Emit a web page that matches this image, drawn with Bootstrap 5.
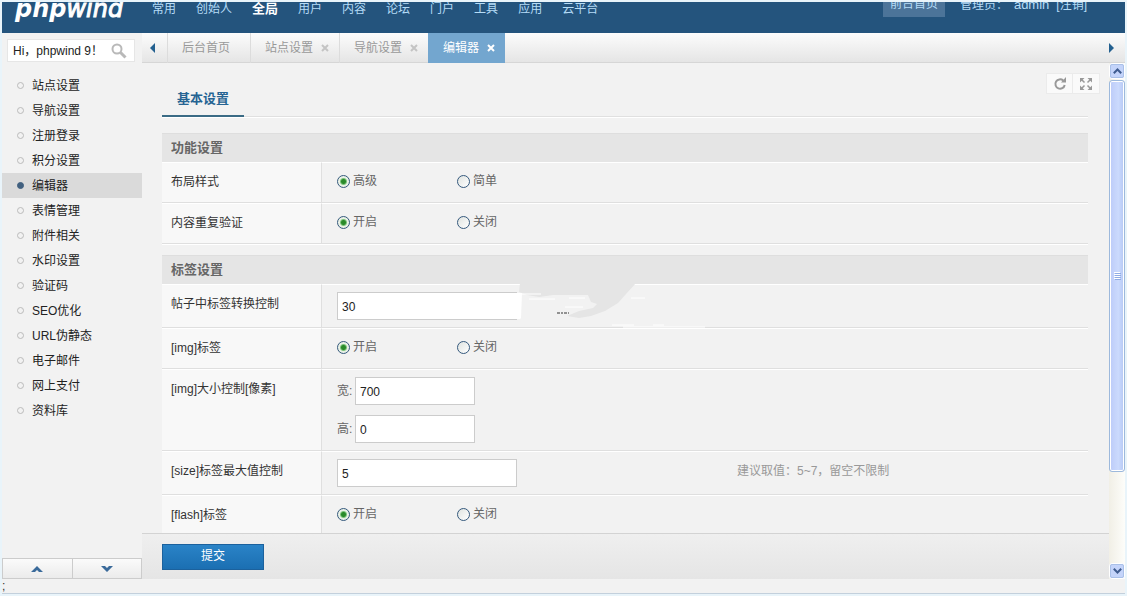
<!DOCTYPE html>
<html lang="zh-CN">
<head>
<meta charset="utf-8">
<meta name="viewport" content="width=device-width, initial-scale=1">
<title>phpwind</title>
<link href="https://cdn.jsdelivr.net/npm/bootstrap@5.3.0/dist/css/bootstrap.min.css" rel="stylesheet">
<style>
body{font:12px/24px "Liberation Sans","Noto Sans CJK SC",sans-serif;color:#333;background:#e9f4fa}
a{text-decoration:none;color:inherit}
svg{display:block}
.shell{padding:2px}
.topbar{height:31px;background:#24547d;color:#b5dcf7}
.logo{font:italic bold 24px/28px "DejaVu Sans",sans-serif;color:#fff;margin:0 0 10px 13px;width:127px}
.logo span{font-weight:400;-webkit-text-stroke:1px #fff}
.mainnav{padding-bottom:12px}
.mainnav a{padding:0 10px}
.mainnav a.active{font-size:13px;font-weight:700;color:#fff}
.account{padding:0 38px 16px 0}
.home-btn{background:#4c7499;padding:0 7px;margin-right:15px;line-height:23px}
.user-name{font-size:13px;margin:0 7px 0 6px}
.side{width:140px;background:#f2f2f2}
.finder{margin:6px 7px 11px 5px;height:23px;border:1px solid #e6e6e6;background:#fff;padding:0 7px 0 5px}
.finder input{border:0;outline:0;padding:0;background:none;color:#222;width:98px;height:20px}
.menu a{display:flex;align-items:center;height:25px;padding-left:15px;gap:8px;color:#222}
.menu a::before{content:"";width:7px;height:7px;border:1px solid #bbb;border-radius:50%}
.menu a.active{background:#dadada}
.menu a.active::before{background:#41607f;border-color:#41607f}
.pager button{border:1px solid #ccc;background:linear-gradient(#fbfbfb,#ebebeb);height:21px;padding:0}
.pager button+button{border-left:0}
.tabs{height:30px;background:linear-gradient(#fcfcfc,#e5e5e5);border-bottom:1px solid #d6d6d6;color:#999}
.tabs .arrow{border:0;background:none;width:25px;padding:0 0 0 8px}
.tabs .arrow-next{width:16px;padding:0}
.tab-item{border-left:1px solid #dcdcdc;padding:0 10px 0 14px;gap:8px;margin-bottom:-1px}
.tab-item.plain{padding-right:20px}
.tab-item button{border:0;background:none;padding:0;color:#c4c4c4}
.tab-item.active{background:#73a6cf;border-color:#73a6cf;color:#fff}
.tab-item.active button{color:#fff}
.workspace{background:#f2f2f2}
.page-body{padding:20px 21px 0 20px}
.subnav{border-bottom:1px solid #e0e0e0;box-shadow:0 1px #fff;margin-bottom:16px}
.subnav a{font-size:13px;font-weight:700;color:#266493;padding:0 15px;line-height:32px;border-bottom:2px solid #3a6b85;margin-bottom:-1px}
.tools{top:10px;right:9px}
.tools button{border:1px solid #ebebeb;background:#fafafa;width:27px;height:21px;padding:0;display:grid;place-items:center}
.tools button+button{border-left-width:0}
.block-title{font-size:13px;font-weight:700;line-height:28px;color:#666;background:#e5e5e5;border-top:1px solid #dedede;padding-left:9px;margin:0}
.settings{border-collapse:separate;border-spacing:0;table-layout:fixed;margin-bottom:11px;box-shadow:0 1px #fff}
.settings th,.settings td{border-top:1px solid #fff;border-bottom:1px solid #dfdfdf;vertical-align:top}
.settings th{width:160px;background:#f8f8f8;border-right:1px solid #dfdfdf;font-weight:400;padding:7px 0 0 9px}
.settings td{padding:6px 15px 9px;color:#666}
.settings td.fields{padding:7px 15px}
.settings .c-main{width:400px}
.settings td.hint{color:#999;padding:7px 15px}
.option{width:120px;gap:3px}
.option input{appearance:none;width:13px;height:13px;margin:0;border:1px solid #35597d;border-radius:50%;background:linear-gradient(135deg,#dfe3e0,#fff)}
.option input:checked{background:radial-gradient(circle,#2a8a2a 0 2px,#7cc47a 3px,#e9f1e6 4px)}
.field{height:28px;width:180px;border:1px solid #ccc;background:#fff;padding:2px 4px 0;color:#222;outline:0;border-radius:0}
.field.short{width:120px}
.size-row{gap:4px}
.size-row+.size-row{margin-top:10px}
.size-row label{width:14px;white-space:nowrap}
.smear{left:170px;top:-9px;width:206px;height:48px}
.actions{height:46px;border-top:1px solid #d3d3d3;background:linear-gradient(#efefef,#e5e5e5);padding:10px 20px}
.submit{width:102px;height:26px;border:1px solid #1b619d;background:linear-gradient(#2a83c7,#1b6fb2);color:#fff;padding:0 0 3px;line-height:20px}
.vscroll{width:16px;background:linear-gradient(90deg,#f1efe6,#fdfdfa)}
.vscroll button{height:16px;border:1px solid #fff;outline:1px solid #a9c0e8;outline-offset:-2px;border-radius:3px;background:#c4d4fa;padding:0;display:grid;place-items:center}
.thumb{height:76%;margin-top:1px;border:1px solid #9db9dc;box-shadow:inset 0 0 0 1px #fff;border-radius:3px;background:linear-gradient(90deg,#bccbf8,#cbdafd 60%,#b5c8f4)}
.status{height:15px;background:#f2f2f2;border-bottom:1px solid #c3d0dc;line-height:15px}
</style>
</head>
<body>
<div class="shell vh-100 d-flex flex-column overflow-hidden">
  <header class="topbar d-flex align-items-end overflow-hidden flex-shrink-0">
    <a href="#" class="logo">php<span>wind</span></a>
    <nav class="mainnav d-flex">
      <a href="#">常用</a><a href="#">创始人</a><a href="#" class="active">全局</a><a href="#">用户</a><a href="#">内容</a><a href="#">论坛</a><a href="#">门户</a><a href="#">工具</a><a href="#">应用</a><a href="#">云平台</a>
    </nav>
    <div class="account ms-auto d-flex">
      <a href="#" class="home-btn">前台首页</a><span>管理员：</span><span class="user-name">admin</span><a href="#">[注销]</a>
    </div>
  </header>

  <div class="d-flex flex-grow-1 overflow-hidden">
    <aside class="side d-flex flex-column flex-shrink-0">
      <form class="finder d-flex align-items-center justify-content-between">
        <input type="text" aria-label="搜索" value="Hi，phpwind 9！">
        <svg width="16" height="16" viewBox="0 0 16 16" fill="none" stroke="#b9b9b9" stroke-width="2"><circle cx="6" cy="6" r="4.500"/><path d="M9.500 9.500l5 5" stroke-width="3"/></svg>
      </form>
      <nav class="menu flex-grow-1">
        <a href="#">站点设置</a><a href="#">导航设置</a><a href="#">注册登录</a><a href="#">积分设置</a><a href="#" class="active">编辑器</a><a href="#">表情管理</a><a href="#">附件相关</a><a href="#">水印设置</a><a href="#">验证码</a><a href="#">SEO优化</a><a href="#">URL伪静态</a><a href="#">电子邮件</a><a href="#">网上支付</a><a href="#">资料库</a>
      </nav>
      <div class="pager d-flex">
        <button type="button" class="flex-fill" aria-label="向上"><svg class="mx-auto" width="12" height="6" viewBox="0 0 12 6"><path d="M0 6L6 0l6 6H8L6 4 4 6z" fill="#3a6a9a"/></svg></button>
        <button type="button" class="flex-fill" aria-label="向下"><svg class="mx-auto" width="12" height="6" viewBox="0 0 12 6"><path d="M0 0l6 6 6-6H8L6 2 4 0z" fill="#3a6a9a"/></svg></button>
      </div>
    </aside>

    <div class="flex-grow-1 d-flex flex-column overflow-hidden">
      <div class="tabs d-flex flex-shrink-0">
        <button type="button" class="arrow" aria-label="向左"><svg width="5" height="10" viewBox="0 0 5 10"><path d="M5 0v10L0 5z" fill="#23608f"/></svg></button>
        <div class="tab-item plain d-flex align-items-center"><a href="#">后台首页</a></div>
        <div class="tab-item d-flex align-items-center"><a href="#">站点设置</a><button type="button" aria-label="关闭"><svg width="8" height="8" viewBox="0 0 8 8"><path d="M1 1l6 6M7 1L1 7" stroke="currentColor" stroke-width="2"/></svg></button></div>
        <div class="tab-item d-flex align-items-center"><a href="#">导航设置</a><button type="button" aria-label="关闭"><svg width="8" height="8" viewBox="0 0 8 8"><path d="M1 1l6 6M7 1L1 7" stroke="currentColor" stroke-width="2"/></svg></button></div>
        <div class="tab-item active d-flex align-items-center"><a href="#">编辑器</a><button type="button" aria-label="关闭"><svg width="8" height="8" viewBox="0 0 8 8"><path d="M1 1l6 6M7 1L1 7" stroke="currentColor" stroke-width="2"/></svg></button></div>
        <button type="button" class="arrow arrow-next ms-auto" aria-label="向右"><svg width="5" height="10" viewBox="0 0 5 10"><path d="M0 0v10l5-5z" fill="#23608f"/></svg></button>
      </div>

      <div class="workspace d-flex flex-grow-1 overflow-hidden">
        <form class="flex-grow-1 d-flex flex-column overflow-hidden position-relative">
          <div class="tools position-absolute d-flex">
            <button type="button" aria-label="刷新"><svg width="14" height="14" viewBox="0 0 14 14"><path d="M10.200 3.500A4.700 4.700 0 1 0 11.700 8" fill="none" stroke="#999" stroke-width="2"/><path d="M8 5.500h5V0z" fill="#999"/></svg></button>
            <button type="button" aria-label="全屏"><svg width="12" height="12" viewBox="0 0 12 12"><path d="M0 0h4.500L0 4.500zM12 0v4.500L7.500 0zM0 12V7.500L4.500 12zM12 12H7.500L12 7.500z" fill="#999"/><path d="M1 1l3.500 3.500M11 1L7.500 4.500M1 11l3.500-3.500M11 11L7.500 7.500" stroke="#999" stroke-width="1.500"/></svg></button>
          </div>
          <div class="page-body flex-grow-1 overflow-hidden">
            <nav class="subnav d-flex"><a href="#">基本设置</a></nav>

            <h2 class="block-title">功能设置</h2>
            <table class="settings w-100">
              <tr><th scope="row">布局样式</th><td><div class="d-flex">
                <label class="option d-flex align-items-center"><input type="radio" name="layout" checked>高级</label>
                <label class="option d-flex align-items-center"><input type="radio" name="layout">简单</label></div></td></tr>
              <tr><th scope="row">内容重复验证</th><td><div class="d-flex">
                <label class="option d-flex align-items-center"><input type="radio" name="repeat" checked>开启</label>
                <label class="option d-flex align-items-center"><input type="radio" name="repeat">关闭</label></div></td></tr>
            </table>

            <h2 class="block-title">标签设置</h2>
            <table class="settings w-100">
              <colgroup><col style="width:160px"><col class="c-main"><col></colgroup>
              <tr><th scope="row"><label for="convert">帖子中标签转换控制</label></th><td class="fields"><div class="position-relative">
                <input class="field d-block" id="convert" type="text" value="30">
                <svg class="smear position-absolute" viewBox="0 0 206 48" aria-hidden="true">
                  <path d="M8 10h7l-1 25 -1 1H8z" fill="#fff"/>
                  <path d="M11 36h5v2h-5z" fill="#f2f2f2"/>
                  <path d="M13 0h116l-10 11-8 9-13 8-14 5-12 2-12-2 12-5 14-3 4-4-6-2-3-7H46l-14 2-12-2-8-3z" fill="#e5e5e5"/>
                  <path d="M15 11h19M22 16h26M62 15h16M58 24h18M124 15h14M105 42h22M146 42h11M116 44h82" stroke="#fff"/>
                  <path d="M50 30h12" stroke="#333" stroke-dasharray="3 1 2 1"/>
                </svg></div></td><td></td></tr>
              <tr><th scope="row">[img]标签</th><td><div class="d-flex">
                <label class="option d-flex align-items-center"><input type="radio" name="img" checked>开启</label>
                <label class="option d-flex align-items-center"><input type="radio" name="img">关闭</label></div></td><td></td></tr>
              <tr><th scope="row">[img]大小控制[像素]</th><td class="fields">
                <div class="size-row d-flex align-items-center"><label for="iw">宽:</label><input class="field short" id="iw" type="text" value="700"></div>
                <div class="size-row d-flex align-items-center"><label for="ih">高:</label><input class="field short" id="ih" type="text" value="0"></div></td><td></td></tr>
              <tr><th scope="row"><label for="maxsize">[size]标签最大值控制</label></th><td class="fields"><input class="field d-block" id="maxsize" type="text" value="5"></td><td class="hint">建议取值：5~7，留空不限制</td></tr>
              <tr><th scope="row">[flash]标签</th><td><div class="d-flex">
                <label class="option d-flex align-items-center"><input type="radio" name="flash" checked>开启</label>
                <label class="option d-flex align-items-center"><input type="radio" name="flash">关闭</label></div></td><td></td></tr>
            </table>
          </div>
          <div class="actions flex-shrink-0"><button type="submit" class="submit d-block">提交</button></div>
        </form>
        <div class="vscroll d-flex flex-column flex-shrink-0">
          <button type="button" aria-label="向上滚动"><svg width="9" height="6" viewBox="0 0 9 6"><path d="M.8 5.200L4.500 1.500l3.700 3.700" fill="none" stroke="#3f5c8f" stroke-width="2"/></svg></button>
          <div class="thumb d-grid align-items-center justify-content-center"><svg width="7" height="8" viewBox="0 0 7 8"><path d="M0 .5h6M0 2.500h6M0 4.500h6M0 6.500h6" stroke="#fff"/><path d="M1 1.500h6M1 3.500h6M1 5.500h6M1 7.500h6" stroke="#8fabe4"/></svg></div>
          <button type="button" class="mt-auto" aria-label="向下滚动"><svg width="9" height="6" viewBox="0 0 9 6"><path d="M.8.8l3.700 3.700L8.200.8" fill="none" stroke="#3f5c8f" stroke-width="2"/></svg></button>
        </div>
      </div>
    </div>
  </div>
  <div class="status flex-shrink-0">;</div>
</div>
<script src="https://cdn.jsdelivr.net/npm/bootstrap@5.3.0/dist/js/bootstrap.bundle.min.js"></script>
</body>
</html>
